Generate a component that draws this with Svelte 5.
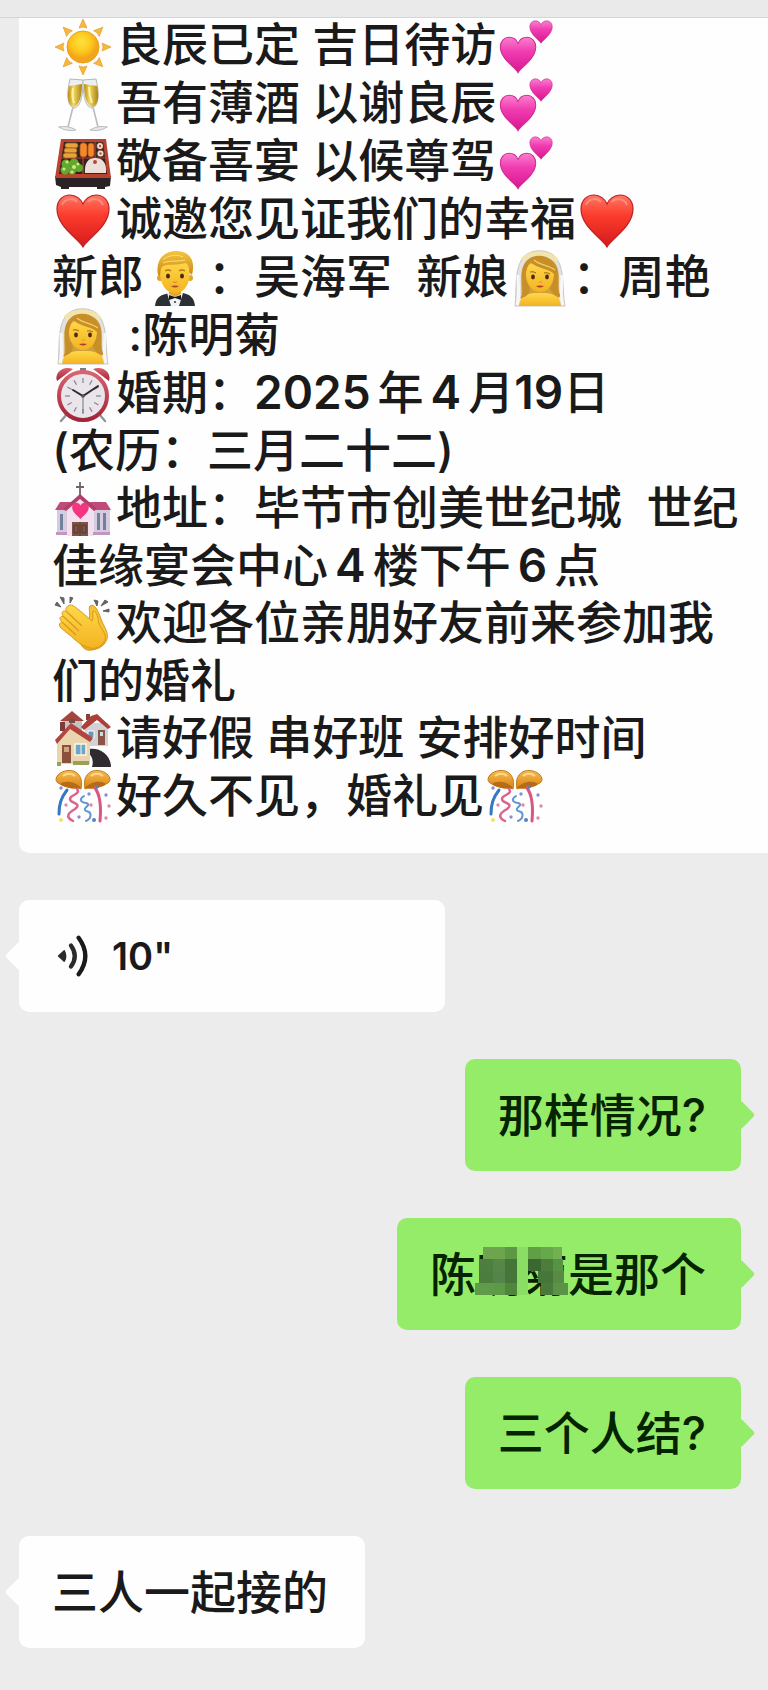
<script>
  // Each line is a list of parts: { e: emoji }, { n: number }, { d: spaced digit }, { y: year } or plain text.
  const invitation = [
    [{ e: 'sun' }, '良辰已定 吉日待访', { e: 'hearts' }],
    [{ e: 'cheers' }, '吾有薄酒 以谢良辰', { e: 'hearts' }],
    [{ e: 'bento' }, '敬备喜宴 以候尊驾', { e: 'hearts' }],
    [{ e: 'heart' }, '诚邀您见证我们的幸福', { e: 'heart' }],
    ['新郎', { e: 'groom' }, '：吴海军  新娘', { e: 'bride' }, '：周艳'],
    [{ e: 'bride' }, ' :陈明菊'],
    [{ e: 'clock' }, '婚期：', { y: '2025' }, '年', { d: '4' }, '月', { n: '19' }, '日'],
    ['(农历：三月二十二)'],
    [{ e: 'church' }, '地址：毕节市创美世纪城  世纪'],
    ['佳缘宴会中心', { d: '4' }, '楼下午', { d: '6' }, '点'],
    [{ e: 'clap' }, '欢迎各位亲朋好友前来参加我'],
    ['们的婚礼'],
    [{ e: 'houses' }, '请好假 串好班 安排好时间'],
    [{ e: 'confetti' }, '好久不见，婚礼见', { e: 'confetti' }]
  ];
  const ticks = Array.from({ length: 12 }, (_, i) => i * 30);
  const rays = Array.from({ length: 8 }, (_, i) => i * 45);
  const mosaic = [
    [44, 0, 12, 48, '#8ade63'],
    [11, 0, 22, 12, '#6ca54e'], [33, 0, 12, 12, '#5d9845'],
    [8, 12, 13, 12, '#4e7f40'], [21, 12, 12, 12, '#568748'], [33, 12, 12, 12, '#457538'],
    [7, 24, 14, 12, '#4b7e3c'], [21, 24, 12, 12, '#53854a'], [33, 24, 12, 12, '#467539'],
    [3, 36, 18, 12, '#5f9b49'], [21, 36, 12, 12, '#5c9a45'], [33, 36, 12, 12, '#4e873b'],
    [56, 0, 13, 12, '#60a044'], [69, 0, 12, 12, '#66a94a'], [81, 0, 9, 12, '#72b052'],
    [56, 12, 13, 12, '#3b6730'], [69, 12, 12, 12, '#4c7d3c'], [81, 12, 10, 12, '#579345'],
    [66, 24, 15, 12, '#467638'], [81, 24, 11, 12, '#568a45'],
    [69, 36, 12, 12, '#4a7a3b'], [81, 36, 15, 12, '#5a9347']
  ];
</script>

<svg class="defs" aria-hidden="true">
  <defs>
    <radialGradient id="gSun" cx=".45" cy=".35"><stop offset="0" stop-color="#ffe23c" /><stop offset=".6" stop-color="#fdc91e" /><stop offset="1" stop-color="#f3a51a" /></radialGradient>
    <linearGradient id="gRed" x2="0" y2="1"><stop offset="0" stop-color="#ff7765" /><stop offset=".4" stop-color="#fb3b2c" /><stop offset="1" stop-color="#d51a1c" /></linearGradient>
    <linearGradient id="gPink" x2="0" y2="1"><stop offset="0" stop-color="#fb7fd0" /><stop offset=".4" stop-color="#f03cb0" /><stop offset="1" stop-color="#d81790" /></linearGradient>
    <linearGradient id="gWine" x2="1" y2="0"><stop offset="0" stop-color="#b88d14" /><stop offset=".4" stop-color="#f3d862" /><stop offset="1" stop-color="#a98215" /></linearGradient>
    <linearGradient id="gSkin" x2="0" y2="1"><stop offset="0" stop-color="#ffd84a" /><stop offset="1" stop-color="#f3b321" /></linearGradient>
    <linearGradient id="gHair" x2="0" y2="1"><stop offset="0" stop-color="#f6c43c" /><stop offset="1" stop-color="#c98a1a" /></linearGradient>
    <linearGradient id="gGold" x2="0" y2="1"><stop offset="0" stop-color="#f9bd4c" /><stop offset="1" stop-color="#d4801a" /></linearGradient>
    <linearGradient id="gRim" x2="0" y2="1"><stop offset="0" stop-color="#d9636f" /><stop offset="1" stop-color="#a32438" /></linearGradient>
  </defs>
</svg>

{#snippet heartShape()}
  <path d="M28 54C24 46 2 34 2 16C2 7 8 2 15 2C21 2 26 6 28 11C30 6 35 2 41 2C48 2 54 7 54 16C54 34 32 46 28 54Z" />
{/snippet}

{#snippet confettiHalf()}
  <path d="M1 9C2 3 11 -1 18 1C25 3 28 10 26 19C20 16 10 18 5 14C2 13 1 11 1 9Z" fill="url(#gGold)" stroke="#c27a1c" />
  <path d="M5 14C10 10 20 11 26 18C20 20 10 18 5 14Z" fill="#b96a15" />
  <path d="M8 6C12 3 17 3 20 6" fill="none" stroke="#ffdc8c" stroke-width="2" />
{/snippet}

{#snippet emoji(name)}
  <svg class="emoji" viewBox="0 0 56 56" aria-hidden="true">
    {#if name === 'sun'}
      {#each rays as a}
        <path d="M28 0L32 9Q28 7 24 9Z" fill="#f5b93c" stroke="#e59b2c" stroke-width=".7" transform="rotate({a} 28 28)" />
      {/each}
      <circle cx="28" cy="28" r="16" fill="url(#gSun)" stroke="#e9a021" />
    {:else if name === 'hearts'}
      <g fill="url(#gPink)" stroke="#cf2a92" stroke-width="1.5">
        <g transform="translate(0 17) scale(.68)">{@render heartShape()}</g>
        <g transform="translate(30 1) scale(.43)">{@render heartShape()}</g>
      </g>
    {:else if name === 'heart'}
      <g fill="url(#gRed)" stroke="#bb2024" stroke-width="1.2">{@render heartShape()}</g>
      <path d="M7 12C9 6 18 4 22 9M33 9C37 4 46 6 48 12" fill="none" stroke="#ff9c8e" stroke-width="2" opacity=".7" />
    {:else if name === 'cheers'}
      <g fill="none" stroke="#b9bcc0" stroke-width="1.6" stroke-linecap="round">
        <path d="M18 30L13 50M38 30L43 50" />
        <path d="M4 50Q13 48 21 53Q11 55 4 50ZM52 50Q43 48 35 53Q45 55 52 50Z" fill="#e6e8ea" stroke-width="1" />
      </g>
      <path d="M15 2L28 3C28 14 27 30 19 31C11 29 12 14 15 2Z" fill="#eceff0" stroke="#b3b7b6" />
      <path d="M41 2L28 3C28 14 29 30 37 31C45 29 44 14 41 2Z" fill="#eceff0" stroke="#b3b7b6" />
      <path d="M14 9L27 7C27 17 25 28 19 30C12 28 12 18 14 9Z" fill="url(#gWine)" />
      <path d="M42 9L29 7C29 17 31 28 37 30C44 28 44 18 42 9Z" fill="url(#gWine)" />
      <path d="M18 11C17 17 17 21 19 26M34 10C34 17 35 21 37 26" fill="none" stroke="#fff1a1" stroke-width="2" />
    {:else if name === 'bento'}
      <path d="M0 41H56L55 51L50 52V54H42V52H14V54H6V52L1 50Z" fill="#292326" />
      <path d="M6 4H51L56 43H0Z" fill="#b9432f" />
      <path d="M9 7H48L52 39H4Z" fill="#35231f" />
      <path d="M28 7V40M6 23H50M40 7V23" stroke="#b9432f" stroke-width="1.2" />
      <g fill="#e8a33d" stroke="#9c5b1e" stroke-width=".8"><rect x="10" y="8" width="13" height="5" rx="2.5" /><rect x="9" y="13" width="13" height="5" rx="2.5" /><rect x="8" y="18" width="14" height="5" rx="2.5" /></g>
      <g fill="#f18a2b" stroke="#b3541c" stroke-width=".8"><rect x="25" y="8" width="7" height="14" rx="3" /><rect x="33" y="8" width="6" height="14" rx="3" /></g>
      <g fill="#eee3d6" stroke="#5a3832" stroke-width="1.4"><circle cx="45" cy="11" r="3.6" /><circle cx="45.500" cy="18.500" r="3.6" /></g>
      <circle cx="45" cy="11" r="1.2" fill="#c44a35" /><circle cx="45.500" cy="18.500" r="1.2" fill="#c44a35" />
      <g fill="#63a82e"><circle cx="11" cy="29" r="4.500" /><circle cx="19" cy="28" r="4.500" /><circle cx="24" cy="33" r="4" /><circle cx="10" cy="35" r="4.500" /><circle cx="17" cy="35" r="4.500" /></g>
      <g fill="#cfe982"><circle cx="12" cy="27" r="1.6" /><circle cx="19" cy="32" r="2" /><circle cx="23" cy="29" r="1.6" /><circle cx="9" cy="34" r="1.6" /><circle cx="17" cy="37" r="1.6" /></g>
      <path d="M30 38C29 27 34 23 40 23C47 23 52 27 51 38Z" fill="#eadfd9" /><circle cx="40" cy="27" r="2" fill="#b8463d" />
    {:else if name === 'groom'}
      <path d="M8 55C9 45 15 44 22 42H36C43 44 47 46 48 55Z" fill="#2d2f36" />
      <path d="M20 42H36L32 55H24Z" fill="#eef2f6" /><path d="M22 37H34V43L28 46L22 43Z" fill="#e5a625" />
      <path d="M22 44L28 46L34 44V49L28 47L22 49Z" fill="#17191d" />
      <circle cx="28" cy="51" r="1" fill="#34363d" />
      <circle cx="13" cy="27" r="3" fill="#e3a32a" /><circle cx="43" cy="27" r="3" fill="#e3a32a" />
      <path d="M13 15C15 8 41 8 43 15C44 30 39 42 28 42C17 42 12 30 13 15Z" fill="url(#gSkin)" />
      <path d="M11 24C8 8 18 0 29 0C42 0 49 9 45 24L42 21C43 17 41 14 39 12C30 15 20 12 15 16C13 19 14 21 13 25Z" fill="url(#gHair)" />
      <path d="M16 9C21 4 30 3 36 6M16 12C22 9 31 11 38 9" fill="none" stroke="#ffe07a" />
      <g fill="#4a2a12"><ellipse cx="21" cy="25" rx="2" ry="2.6" /><ellipse cx="35" cy="25" rx="2" ry="2.6" /></g>
      <path d="M18 20Q21 18 24 20M32 20Q35 18 38 20" fill="none" stroke="#b67a16" stroke-width="1.4" />
      <path d="M26 31Q28 32 30 31" fill="none" stroke="#d08d1d" /><path d="M24 35Q28 38 32 35Q28 34 24 35Z" fill="#a64727" />
    {:else if name === 'bride'}
      <path d="M3 55C5 40 2 20 10 8C17 -3 38 -3 45 8C53 20 50 40 53 55Z" fill="#e4e2e0" stroke="#c9c6c4" />
      <path d="M9 50C11 34 6 20 14 11C20 4 36 4 42 11C50 20 45 34 47 50Z" fill="#d0a13a" />
      <path d="M10 9C17 1 38 0 45 10" fill="none" stroke="#f3e4a8" stroke-width="4" />
      <path d="M7 55C8 45 15 43 22 42H34C42 43 48 45 49 55Z" fill="url(#gSkin)" />
      <path d="M14 19C15 8 40 8 42 19C43 31 37 41 28 41C19 41 13 31 14 19Z" fill="url(#gSkin)" />
      <path d="M20 6C13 9 9 17 10 27C10 38 12 43 8 47C16 46 19 41 17 35C13 30 12 21 18 11C26 18 36 17 42 23C42 31 39 34 38 37C40 44 45 46 49 46C45 39 47 31 46 21C43 8 32 2 20 6Z" fill="#c88e28" />
      <path d="M22 9C27 14 36 14 43 19" fill="none" stroke="#f2cc66" stroke-width="1.4" />
      <g fill="#4a2a12"><ellipse cx="21" cy="26" rx="1.9" ry="2.4" /><ellipse cx="35" cy="26" rx="1.9" ry="2.4" /></g>
      <path d="M18 21Q21 20 24 22M32 22Q35 21 38 23" fill="none" stroke="#9a661b" /><path d="M24 35Q28 38 32 35Q28 34 24 35Z" fill="#b13d2e" />
      <path d="M27 31H30" stroke="#d9982a" /><path d="M5 54C8 46 6 36 6 24M51 54C48 46 50 36 50 24" fill="none" stroke="#f8f7f5" stroke-width="3" />
    {:else if name === 'clock'}
      <path d="M12 47L6 54M44 47L50 54" stroke="#8e969d" stroke-width="2.4" stroke-linecap="round" />
      <path d="M25 1H31V4H25Z" fill="#777f88" />
      <path d="M2 14C-1 6 8 -2 18 2ZM54 14C57 6 48 -2 38 2Z" fill="url(#gRim)" />
      <circle cx="28" cy="29" r="24" fill="#e9e5ea" stroke="url(#gRim)" stroke-width="4" />
      {#each ticks as a}
        <path d="M28 11V16" stroke="#85858c" stroke-width="1.2" transform="rotate({a} 28 29)" />
      {/each}
      <path d="M18 23L28 29L43 19" fill="none" stroke="#2d2d31" stroke-width="2" stroke-linecap="round" />
      <path d="M28 27V46" stroke="#777" /><circle cx="28" cy="29" r="1.8" fill="#555" />
    {:else if name === 'church'}
      <path d="M25 0V15M21 5H29" stroke="#73646a" stroke-width="1.8" />
      <path d="M2 26H55V52H2Z" fill="#d7cbe0" />
      <path d="M5 20H51L56 28H0Z" fill="#c04a78" />
      <path d="M25 14L39 27V54H12V27Z" fill="#f3dff0" />
      <path d="M25 12L42 27L39 29L25 17L11 29L8 27Z" fill="#b33e6b" />
      <g fill="#72809f"><path d="M5 32H8V48H5ZM42 31H45V48H42ZM48 31H51V48H48Z" /></g>
      <path d="M1 50H12V53H1ZM38 50H55V53H38Z" fill="#c197c0" />
      <g transform="translate(16.500 20) scale(.32)" fill="#f3367e">{@render heartShape()}</g>
      <path d="M17 40H33V54H17Z" fill="#7e5445" /><path d="M25 40V54M19 43H23V51H19ZM27 43H31V51H27Z" fill="none" stroke="#54362e" stroke-width=".9" />
    {:else if name === 'clap'}
      <path d="M0 8L6 10L2 5ZM5 0L9 7L9 1ZM15 0L15 6L18 1ZM39 3L42 9L43 4ZM46 9L53 5L50 3ZM48 14L54 15L54 12Z" fill="#606368" stroke="#606368" />
      <g stroke="#d79a1d" stroke-width="1" stroke-linejoin="round">
        <path d="M34 22C36 17 33 12 35 9C39 6 43 13 46 22C49 30 54 36 52 42C50 47 48 49 43 50Z" fill="#f6c235" />
        <path d="M24 44C28 52 31 54 37 53C43 52 47 50 50 46L36 40Z" fill="#e9a924" />
        <path d="M13 9C16 6 20 10 24 13L37 24C39 21 37 16 38 14C42 14 43 21 44 27C47 33 52 38 50 43C46 51 39 53 32 50C26 48 21 44 17 40L6 31C3 28 5 24 8 26C3 22 5 18 9 20C5 16 8 12 12 15C10 13 11 10 13 9Z" fill="url(#gSkin)" />
        <path d="M12 15L27 29M9 20L24 34M8 26L21 38" fill="none" stroke-width="1.3" />
      </g>
    {:else if name === 'houses'}
      <path d="M7 7H27V20H7Z" fill="#c4c3c1" /><path d="M17 -1L29 9H5Z" fill="#a34640" /><path d="M14 7H20V11H14Z" fill="#7a4c46" />
      <path d="M30 11H53V34H30Z" fill="#d1d2d4" /><path d="M31 2H35V8H31Z" fill="#8a4039" />
      <path d="M42 2L56 15L53 17L42 8L29 18L26 15L36 4Z" fill="#ac4039" />
      <path d="M33 19H39V26H33Z" fill="#6a96b7" stroke="#fff" /><path d="M43 18H50V33H43Z" fill="#8a5345" /><path d="M45 20H48V24H45Z" fill="#c8dce5" />
      <path d="M34 37C45 35 56 43 56 55H37C39 49 37 43 32 40Z" fill="#302b2f" />
      <path d="M4 24L16 15L35 28V52L2 52V28Z" fill="#ead5ae" /><path d="M5 10H10V19H5Z" fill="#7c3d39" />
      <path d="M16 11L38 26L35 30L15 17L2 32L0 28Z" fill="#b2453e" />
      <path d="M7 33H16V51H7Z" fill="#8b513b" /><path d="M9 35H14V40H9Z" fill="#cfa67d" /><path d="M20 32H31V43H20Z" fill="#6ba6cb" stroke="#fff5df" stroke-width="1.5" />
      <path d="M26 32V43" stroke="#fff5df" /><path d="M2 50H6V54H2ZM18 49H34V53H18Z" fill="#9aa05a" />
    {:else}
      {@render confettiHalf()}
      <g transform="translate(56 0) scale(-1 1)">{@render confettiHalf()}</g>
      <g fill="none" stroke-linecap="round">
        <path d="M12 20C6 28 4 34 4 44" stroke="#3478c6" stroke-width="3" />
        <path d="M22 19C27 25 11 25 16 31C20 34 26 34 20 39C13 43 10 47 18 51" stroke="#dc638e" stroke-width="2.5" />
        <path d="M29 26C24 29 25 32 31 33C38 35 26 38 31 41C38 42 36 49 31 51" stroke="#6095cd" stroke-width="2" />
        <path d="M40 18C46 26 46 40 45 51" stroke="#dc5580" stroke-width="3" />
      </g>
      <g fill="#8d8bd0"><circle cx="6" cy="18" r="1.7" /><circle cx="34" cy="24" r="1.7" /><circle cx="51" cy="25" r="1.7" /><circle cx="24" cy="47" r="1.7" /></g>
      <g fill="#e18aa5"><circle cx="11" cy="35" r="1.7" /><circle cx="36" cy="35" r="1.7" /><circle cx="54" cy="36" r="1.7" /><circle cx="51" cy="48" r="1.7" /></g>
      <circle cx="6" cy="50" r="2" fill="#f0e36c" /><circle cx="39" cy="50" r="2" fill="#5484bd" /><circle cx="42" cy="17" r="1.7" fill="#4c83c5" />
    {/if}
  </svg>
{/snippet}

<div class="chat">
  <header class="bar"></header>
  <main>
    <article class="bubble card">
      {#each invitation as line}
        <p class:pictured={line.some((part) => part.e)}>
          {#each line as part}{#if part.e}{@render emoji(part.e)}{:else if part.n}<span class="number">{part.n}</span>{:else if part.d}<span class="number spaced">{part.d}</span>{:else if part.y}<span class="number year">{part.y}</span>{:else}<span>{part}</span>{/if}{/each}
        </p>
      {/each}
    </article>

    <button class="bubble in voice" type="button">
      <svg class="wave" viewBox="0 0 36 48" aria-hidden="true">
        <path d="M6 24L12 18.500Q15 24 12 29.500Z" fill="#2b2b2b" stroke="#2b2b2b" stroke-width="1.500" stroke-linejoin="round" />
        <path d="M19 13Q27 24 19 35" fill="none" stroke="#2b2b2b" stroke-width="4.500" stroke-linecap="round" />
        <path d="M27 5Q41 24 27 43" fill="none" stroke="#1a1a1a" stroke-width="4.500" stroke-linecap="round" />
      </svg>
      <span class="number">10"</span>
    </button>

    <p class="bubble out">那样情况?</p>
    <p class="bubble out">
      陈<span class="masked">明菊<svg viewBox="0 0 98 48" aria-hidden="true">
        {#each mosaic as [x, y, w, h, fill]}<rect {x} {y} width={w} height={h} {fill} />{/each}
      </svg></span>是那个
    </p>
    <p class="bubble out">三个人结?</p>
    <p class="bubble in">三人一起接的</p>
  </main>
</div>

<style>
  :global(body) {
    margin: 0;
    background: #ececec;
  }
  .defs {
    position: absolute;
    width: 0;
    height: 0;
  }
  .chat {
    font-family: Inter, 'Noto Sans CJK SC', sans-serif;
    font-size: 46px;
    font-weight: 500;
    line-height: 46px;
    color: #1a1a1a;
    overflow: hidden;
  }
  .bar {
    box-sizing: border-box;
    height: 18px;
    background: #ebeaea;
    border-bottom: 1px solid #d6d6d6;
  }
  main {
    display: flex;
    flex-direction: column;
    gap: 47px;
    padding: 0 27px 40px 19px;
  }
  p {
    margin: 0;
  }
  .bubble {
    position: relative;
    box-sizing: border-box;
    border-radius: 10px;
    background: #fefefe;
    white-space: nowrap;
  }
  .card {
    margin-right: -27px;
    padding: 0 0 26px 33px;
    border-radius: 0 0 0 10px;
  }
  .card p {
    display: flex;
    align-items: flex-start;
    min-height: 57px;
    line-height: 52px;
  }
  .card .pictured {
    min-height: 58px;
  }
  .card span {
    white-space: pre;
  }
  .emoji {
    flex: none;
    width: 56px;
    height: 56px;
    margin: 1px 5px 1px 3px;
    overflow: visible;
  }
  .number {
    font-weight: 600;
  }
  .card .spaced {
    margin: 0 7px;
  }
  .card .year {
    margin-right: 7px;
  }
  .in,
  .out {
    padding: 33px;
  }
  .in {
    align-self: flex-start;
    padding-right: 37px;
  }
  .out {
    align-self: flex-end;
    padding-right: 35px;
    background: #95ec69;
    color: #062300;
  }
  .in::before,
  .out::before {
    content: '';
    position: absolute;
    top: 50%;
    left: -10px;
    width: 21px;
    height: 21px;
    border-radius: 3px;
    background: inherit;
    transform: translateY(-50%) rotate(45deg);
  }
  .out::before {
    left: auto;
    right: -10px;
  }
  .voice {
    display: flex;
    align-items: center;
    gap: 24px;
    width: 59%;
    min-height: 112px;
    border: 0;
    color: inherit;
    font: inherit;
    font-size: 38px;
    line-height: 46px;
  }
  .wave {
    width: 36px;
    height: 46px;
  }
  .masked {
    position: relative;
  }
  .masked svg {
    position: absolute;
    top: 1px;
    left: -4px;
    width: 98px;
    height: 48px;
  }
</style>
